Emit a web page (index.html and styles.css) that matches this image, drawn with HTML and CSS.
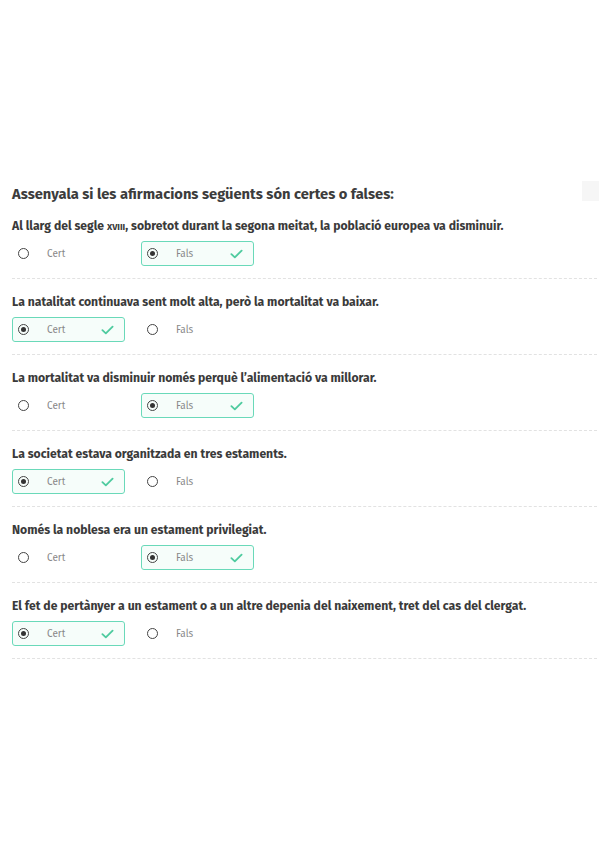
FILE: index.html
```html
<!DOCTYPE html>
<html lang="ca">
<head>
    <meta charset="UTF-8">
    <title>Cert o fals</title>
    <link rel="stylesheet" href="styles.css">
</head>
<body>
    <div class="quiz">
        <div class="quiz-head">
            <h2>Assenyala si les afirmacions següents són certes o falses:</h2>
            <div class="corner-box"></div>
        </div>

        <!-- 1 -->
        <div class="question">
            <p class="q-text">Al llarg del segle <span class="sc">xviii</span>, sobretot durant la segona meitat, la població europea va disminuir.</p>
            <div class="options">
                <div class="option"><span class="radio"></span><span class="label">Cert</span></div>
                <div class="option correct"><span class="radio checked"></span><span class="label">Fals</span>
                    <svg class="tick" viewBox="0 0 14 10"><path d="M1.5 5.2 L5.2 8.6 L12.5 1.4"/></svg></div>
            </div>
        </div>

        <!-- 2 -->
        <div class="question">
            <p class="q-text">La natalitat continuava sent molt alta, però la mortalitat va baixar.</p>
            <div class="options">
                <div class="option correct"><span class="radio checked"></span><span class="label">Cert</span>
                    <svg class="tick" viewBox="0 0 14 10"><path d="M1.5 5.2 L5.2 8.6 L12.5 1.4"/></svg></div>
                <div class="option"><span class="radio"></span><span class="label">Fals</span></div>
            </div>
        </div>

        <!-- 3 -->
        <div class="question">
            <p class="q-text">La mortalitat va disminuir només perquè l’alimentació va millorar.</p>
            <div class="options">
                <div class="option"><span class="radio"></span><span class="label">Cert</span></div>
                <div class="option correct"><span class="radio checked"></span><span class="label">Fals</span>
                    <svg class="tick" viewBox="0 0 14 10"><path d="M1.5 5.2 L5.2 8.6 L12.5 1.4"/></svg></div>
            </div>
        </div>

        <!-- 4 -->
        <div class="question">
            <p class="q-text">La societat estava organitzada en tres estaments.</p>
            <div class="options">
                <div class="option correct"><span class="radio checked"></span><span class="label">Cert</span>
                    <svg class="tick" viewBox="0 0 14 10"><path d="M1.5 5.2 L5.2 8.6 L12.5 1.4"/></svg></div>
                <div class="option"><span class="radio"></span><span class="label">Fals</span></div>
            </div>
        </div>

        <!-- 5 -->
        <div class="question">
            <p class="q-text">Només la noblesa era un estament privilegiat.</p>
            <div class="options">
                <div class="option"><span class="radio"></span><span class="label">Cert</span></div>
                <div class="option correct"><span class="radio checked"></span><span class="label">Fals</span>
                    <svg class="tick" viewBox="0 0 14 10"><path d="M1.5 5.2 L5.2 8.6 L12.5 1.4"/></svg></div>
            </div>
        </div>

        <!-- 6 -->
        <div class="question">
            <p class="q-text">El fet de pertànyer a un estament o a un altre depenia del naixement, tret del cas del clergat.</p>
            <div class="options">
                <div class="option correct"><span class="radio checked"></span><span class="label">Cert</span>
                    <svg class="tick" viewBox="0 0 14 10"><path d="M1.5 5.2 L5.2 8.6 L12.5 1.4"/></svg></div>
                <div class="option"><span class="radio"></span><span class="label">Fals</span></div>
            </div>
        </div>
    </div>
</body>
</html>
```

FILE: styles.css
```css
body {
    margin: 0;
    background: #fff;
    font-family: "Fira Sans", Lato, "Open Sans", sans-serif;
    color: #333;
}

.quiz {
    padding: 182px 2px 0 12px;
}

.quiz-head {
    display: flex;
    justify-content: space-between;
    align-items: flex-start;
}

.quiz-head h2 {
    margin: 3px 0 0;
    font-size: 14.7px;
    font-weight: 700;
    color: #3c3c3c;
}

.corner-box {
    width: 17px;
    height: 20px;
    margin-top: -1px;
    margin-right: -2px;
    background: #f6f6f6;
}

.question {
    padding: 16px 0 12px;
    border-bottom: 1px dashed #e2e2e2;
}

.question + .question {
    padding-top: 16px;
}

.q-text {
    margin: 0 0 8px;
    font-size: 12.2px;
    font-weight: 700;
    color: #3a3a3a;
}

.sc {
    font-size: 9px;
    text-transform: uppercase;
}

.options {
    display: flex;
    gap: 16px;
}

.option {
    box-sizing: border-box;
    width: 113px;
    height: 25px;
    display: flex;
    align-items: center;
    padding: 0 10px 0 5px;
    border: 1.5px solid transparent;
    border-radius: 3px;
}

.option.correct {
    border-color: #6ad9b9;
    background: #f6fdfa;
}

.radio {
    box-sizing: border-box;
    width: 11px;
    height: 11px;
    border: 1.5px solid #444;
    border-radius: 50%;
    position: relative;
}

.radio.checked::after {
    content: "";
    position: absolute;
    left: 1.5px;
    top: 1.5px;
    width: 5px;
    height: 5px;
    border-radius: 50%;
    background: #333;
}

.label {
    margin-left: 18px;
    font-size: 10px;
    color: #888;
    flex-grow: 1;
}

.tick {
    width: 13px;
    height: 10px;
    fill: none;
    stroke: #4fcb9f;
    stroke-width: 2;
    stroke-linecap: round;
    stroke-linejoin: round;
}
```
